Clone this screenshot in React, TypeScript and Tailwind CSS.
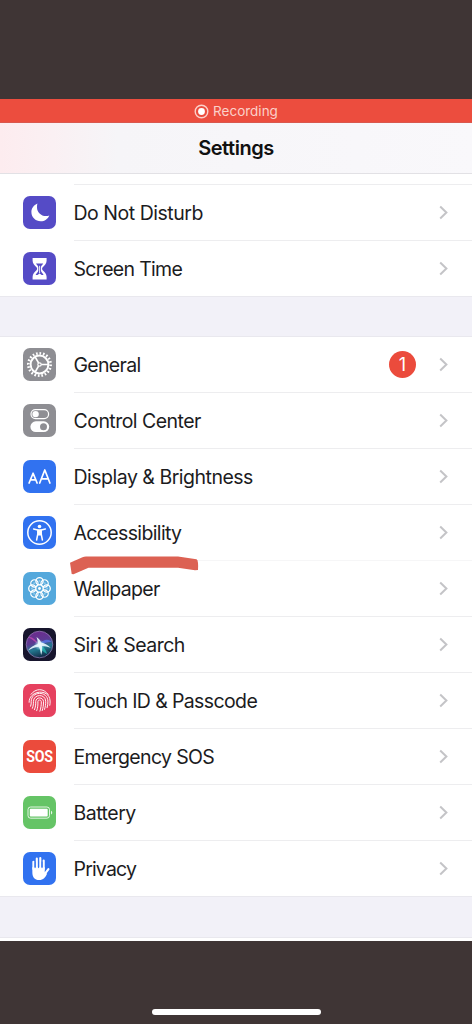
import type { ReactNode } from "react";
import { twMerge } from "tailwind-merge";

type SettingItem = {
    label: string;
    icon: ReactNode;
    iconBg: string;
    tracking: string;
    badge?: number;
};

const MoonIcon = () => (
    <path d="M14.4 7.400c-3.500 1.500-6 4.700-6 8.500 0 5.200 4.100 9.300 9.300 9.300 3.900 0 7.200-2.300 8.600-5.800-1.100.5-2.200.7-3.400.7-4.900 0-8.900-3.900-8.900-8.600 0-1.500 0-2.900.4-4.100z" fill="#fff" />
);

const HourglassIcon = () => (
    <>
        <path d="M9.600 6h14v2.700c0 3.100-2.300 4.800-3.900 6.500-.8.900-.8 2.100 0 3 1.600 1.700 3.900 3.400 3.900 6.600v2.700h-14v-2.700c0-3.200 2.300-4.900 3.900-6.600.8-.9.800-2.100 0-3-1.600-1.700-3.900-3.400-3.900-6.500z" fill="#fff" />
        <path d="M13 11.600h7.200c-.7 1.500-2.200 2.200-2.300 3.700v3.200c.2 1.700 1.900 2.700 2.700 4.500h-1.900l-2.100-1.500-2.100 1.500h-1.900c.8-1.800 2.500-2.800 2.700-4.500v-3.200c-.1-1.500-1.600-2.200-2.300-3.700z" fill="#554bc6" />
        <path d="M16.600 13.800v7.400" stroke="#fff" strokeWidth="0.900" />
    </>
);

const GearIcon = () => (
    <g fill="none" stroke="#fff">
        <circle cx="16.500" cy="16.500" r="11.200" strokeWidth="2.600" pathLength="40" strokeDasharray="0.950 1.050" />
        <circle cx="16.500" cy="16.500" r="8.900" strokeWidth="2" />
        <circle cx="16.500" cy="16.500" r="1.700" strokeWidth="1.200" />
        <path d="M18.200 16.500h7M15.600 15l-3.500-6.100M15.600 18l-3.500 6.100" strokeWidth="1.600" />
    </g>
);

const TogglesIcon = () => (
    <>
        <rect x="8" y="5.600" width="17.600" height="9" rx="4.500" fill="none" stroke="#fff" strokeWidth="1.200" />
        <circle cx="12.600" cy="10.100" r="3.200" fill="#fff" />
        <rect x="7.400" y="17.300" width="18.800" height="10.800" rx="5.400" fill="#fff" />
        <circle cx="20.500" cy="22.700" r="3.500" fill="#8e8e93" />
    </>
);

const TextSizeIcon = () => (
    <g fill="none" stroke="#fff" strokeWidth="1.700" strokeLinejoin="round" strokeLinecap="round">
        <path d="M6.100 23l4-9.800L14.100 23M7.500 19.800h5.200" />
        <path d="M16.700 23l5.100-13L26.900 23M18.400 18.900h6.800" />
    </g>
);

const AccessibilityIcon = () => (
    <>
        <circle cx="16.500" cy="16.500" r="11.700" fill="none" stroke="#fff" strokeWidth="1.500" />
        <circle cx="16.500" cy="10.500" r="1.800" fill="#fff" />
        <path d="M10.600 13l4.200.9v4.100L13.600 24M22.400 13l-4.200.9v4.100l1.200 6" fill="none" stroke="#fff" strokeWidth="1.500" strokeLinecap="round" strokeLinejoin="round" />
        <path d="M14.400 13.300h4.200v4.600l-.8 1.600h-2.600l-.8-1.600z" fill="#fff" />
    </>
);

const WallpaperIcon = () => (
    <>
        {[0, 45, 90, 135, 180, 225, 270, 315].map((deg) => (
            <g key={deg} transform={`rotate(${deg} 16.500 16.500)`}>
                <circle cx="16.500" cy="9.300" r="3.600" fill="none" stroke="#fff" strokeWidth="1.300" />
                <circle cx="16.500" cy="8.900" r="0.900" fill="#fff" opacity="0.400" />
            </g>
        ))}
        <circle cx="16.500" cy="16.500" r="3.800" fill="none" stroke="#fff" strokeWidth="0.900" opacity="0.500" />
        <circle cx="16.500" cy="16.500" r="1.400" fill="#fff" />
    </>
);

const SiriIcon = () => (
    <>
        <defs>
            <linearGradient id="siriOrb" x1="0.300" y1="0" x2="0.600" y2="1">
                <stop offset="0" stopColor="#6d2a8c" />
                <stop offset="0.400" stopColor="#5d3a93" />
                <stop offset="0.650" stopColor="#23788f" />
                <stop offset="1" stopColor="#10233f" />
            </linearGradient>
            <radialGradient id="siriGlow">
                <stop offset="0" stopColor="#fff" />
                <stop offset="0.400" stopColor="#d9f4ff" stopOpacity="0.700" />
                <stop offset="1" stopColor="#62c9e9" stopOpacity="0" />
            </radialGradient>
        </defs>
        <circle cx="16.500" cy="16.500" r="13.300" fill="url(#siriOrb)" stroke="#9c83bd" strokeWidth="0.700" />
        <path d="M15.500 16C12 11 8 7.500 5 9.500c3 .5 7 4.500 10.500 6.500z" fill="#d14bb4" opacity="0.700" />
        <path d="M16 16c4-4 9-6 12.500-2C24 13.500 20 16.500 16 16z" fill="#5876e8" opacity="0.800" />
        <path d="M16 17c4 1 7 4 8 9-4-2-7-5-8-9z" fill="#27c2ba" opacity="0.700" />
        <circle cx="16.500" cy="17" r="5.500" fill="url(#siriGlow)" />
        <path d="M13.500 9c2.300 1.400 3.900 3.200 4.600 5.600 3.700 1 7 2.600 9.600 5.200-3.100-1-6-1.600-8.800-1.800.6 3.200.3 6.300-.8 9-.5-3.300-1.200-5.900-2.300-8.300-4 .3-7.500 1.700-10.800 3.900 2.400-3.400 5.800-5.500 10-6.600-.1-2.500-.6-4.700-1.500-7z" fill="#e9fbff" opacity="0.900" />
    </>
);

const TouchIdIcon = () => (
    <g fill="none" stroke="#fff" strokeWidth="1" strokeLinecap="round" opacity="0.950">
        <path d="M8 10.300c4.700-6.300 12.700-6.300 17.200.2" />
        <path d="M6.100 18.300c-.5-12 20.300-14.600 21-1.300.1 1.700 0 3-.3 4.300" />
        <path d="M7.600 22.200c.6-1.500.7-3 .6-4.700C8.300 7 24.500 6.500 24.900 17.200c.1 2.500-.2 4.500-.8 6.500" />
        <path d="M9.400 24.300c.9-2.300 1.100-4.400 1-6.700.1-7.800 12-8.100 12.300-.4.1 2.900-.3 5.700-1.200 8.200" />
        <path d="M11.400 25.700c1.200-2.600 1.400-5.200 1.300-8 .1-5 7.600-5 7.800-.1.100 3.300-.4 6.300-1.300 9" />
        <path d="M13.700 26.700c1.200-3.200 1.300-6 1.200-9 .1-2.300 3.200-2.300 3.400 0 .1 3.500-.4 6.500-1.400 9.500" />
    </g>
);

const BatteryIcon = () => (
    <>
        <rect x="5" y="11" width="21.500" height="11.200" rx="2.600" fill="none" stroke="#fff" strokeWidth="0.900" opacity="0.900" />
        <rect x="6.800" y="12.800" width="17.900" height="7.600" rx="0.900" fill="#fff" />
        <path d="M28 14.700c1.700.5 1.700 3.300 0 3.800z" fill="#fff" opacity="0.850" />
    </>
);

const HandIcon = () => (
    <g fill="none" stroke="#fff" strokeLinecap="round" strokeLinejoin="round">
        <path d="M10.400 17V9.700M13.800 16V6.600M17.300 16V6M20.700 17V8.600" strokeWidth="2.100" />
        <path d="M25.400 17.100l-3.500 4.700" strokeWidth="2.200" />
        <path d="M9.350 15.200h12.400v5l2.300 1.600c-1.500 3.300-3.700 6.300-7.800 6.300-4.900 0-6.900-3.300-6.900-7.600z" fill="#fff" stroke="none" />
        <path d="M12.100 10v5.700M15.550 10v5.700M19 10v5.700" stroke="#3172f0" strokeWidth="0.900" />
    </g>
);

const focusItems: SettingItem[] = [
    { label: "Do Not Disturb", icon: <MoonIcon />, iconBg: "bg-[#554bc6]", tracking: "tracking-[-0.48px]" },
    { label: "Screen Time", icon: <HourglassIcon />, iconBg: "bg-[#554bc6]", tracking: "tracking-[-0.68px]" },
];

const generalItems: SettingItem[] = [
    { label: "General", icon: <GearIcon />, iconBg: "bg-[#8e8e93]", tracking: "tracking-[-0.7px]", badge: 1 },
    { label: "Control Center", icon: <TogglesIcon />, iconBg: "bg-[#8e8e93]", tracking: "tracking-[-0.53px]" },
    { label: "Display & Brightness", icon: <TextSizeIcon />, iconBg: "bg-[#3172f0]", tracking: "tracking-[-0.5px]" },
    { label: "Accessibility", icon: <AccessibilityIcon />, iconBg: "bg-[#3172f0]", tracking: "tracking-[-0.64px]" },
    { label: "Wallpaper", icon: <WallpaperIcon />, iconBg: "bg-[#54a8dc]", tracking: "tracking-[-0.7px]" },
    { label: "Siri & Search", icon: <SiriIcon />, iconBg: "bg-[#17152d]", tracking: "tracking-[-0.5px]" },
    { label: "Touch ID & Passcode", icon: <TouchIdIcon />, iconBg: "bg-[#e6415f]", tracking: "tracking-[-0.62px]" },
    { label: "Emergency SOS", icon: "SOS", iconBg: "bg-[#eb4b3c]", tracking: "tracking-[-0.66px]" },
    { label: "Battery", icon: <BatteryIcon />, iconBg: "bg-[#65c466]", tracking: "tracking-[-0.5px]" },
    { label: "Privacy", icon: <HandIcon />, iconBg: "bg-[#3172f0]", tracking: "tracking-[-0.82px]" },
];

function SettingRow({ item, last }: { item: SettingItem; last: boolean }) {
    const marked = item.label === "Accessibility";

    return (
        <div className={twMerge("flex h-14 pl-[23px]", last && "h-[55px]")}>
            <div className="flex h-[55px] w-[51px] shrink-0 items-center">
                <div className={twMerge("flex size-[33px] items-center justify-center rounded-[7px]", item.iconBg)}>
                    {typeof item.icon === "string" ? (
                        <span className="scale-x-[0.86] pt-px font-[Roboto,sans-serif] text-[16.5px] leading-none font-bold tracking-[-0.3px] text-white">{item.icon}</span>
                    ) : (
                        <svg viewBox="0 0 33 33" className="size-[33px]">{item.icon}</svg>
                    )}
                </div>
            </div>
            <div
                className={twMerge(
                    "relative flex flex-1 items-center border-b border-[#ededef] pr-[24px]",
                    marked && "border-[#f6f6f7]",
                    last && "border-b-0"
                )}
            >
                <span className={twMerge("-ml-[0.5px] flex-1 pt-[2px] text-[19.5px] text-[#1c1c1e]", item.tracking)}>{item.label}</span>
                {item.badge && (
                    <span className="mr-[23px] flex size-[27px] items-center justify-center rounded-full bg-[#eb4b3c] text-[18px] text-white">
                        {item.badge}
                    </span>
                )}
                <svg viewBox="0 0 9 15" className="h-[15px] w-[9px]">
                    <path d="M1.200 1.500l6.200 6-6.200 6" fill="none" stroke="#c4c4c7" strokeWidth="2" />
                </svg>
                {/* hand drawn marker under the highlighted row */}
                {marked && (
                    <svg viewBox="0 0 130 20" className="absolute top-[50px] left-[-5px] z-10 h-5 w-[130px]">
                        <path d="M1 7.700L13.500 2.200Q15 1.500 17 1.500H109L127.500 4.300Q128.700 4.500 129 8Q129.300 11 129 15L126 15.300L109 12.800H19.500L4.500 19.300L2.700 19Z" fill="#dc6153" />
                    </svg>
                )}
            </div>
        </div>
    );
}

function SettingGroup({ items }: { items: SettingItem[] }) {
    return (
        <div className="shrink-0 bg-white">
            {items.map((item, i) => (
                <SettingRow key={item.label} item={item} last={i === items.length - 1} />
            ))}
        </div>
    );
}

function App() {
    return (
        <div className="flex h-[1024px] w-[472px] flex-col overflow-hidden bg-[#3f3535] font-[Inter,sans-serif]">
            <div className="h-[99px] shrink-0" />
            <div className="flex h-6 shrink-0 items-center justify-center gap-1 border-b border-[#d9584e] bg-[#ec4d3e] pt-[2px] text-[#fbd0c9]">
                <svg viewBox="0 0 15 15" className="size-[15px]">
                    <circle cx="7.500" cy="7.500" r="6.300" fill="none" stroke="currentColor" strokeWidth="1.400" />
                    <circle cx="7.500" cy="7.500" r="3.400" fill="#fff" />
                </svg>
                <span className="text-[13.5px]">Recording</span>
            </div>
            <div className="flex h-[51px] shrink-0 items-center justify-center border-b border-[#e2e1e5] bg-linear-to-r from-[#fdecef] via-[#f6f5f8] via-25% to-[#f9f8fb]">
                <h1 className="text-[20px] font-semibold tracking-[-0.45px] text-[#111]">Settings</h1>
            </div>
            <div className="flex h-[11px] shrink-0 bg-white pl-[74px]">
                <div className="flex-1 border-b border-[#ededef]" />
            </div>
            <SettingGroup items={focusItems} />
            <div className="h-[41px] shrink-0 border-y border-[#e9e8ee] bg-[#f2f1f8]" />
            <SettingGroup items={generalItems} />
            <div className="h-[42px] shrink-0 border-y border-[#e9e8ee] bg-[#f2f1f8]" />
            <div className="h-[3px] shrink-0 bg-white" />
            <div className="flex flex-1 items-end justify-center pb-[9px]">
                <div className="h-[6px] w-[169px] rounded-full bg-white" />
            </div>
        </div>
    );
}

export default App;
